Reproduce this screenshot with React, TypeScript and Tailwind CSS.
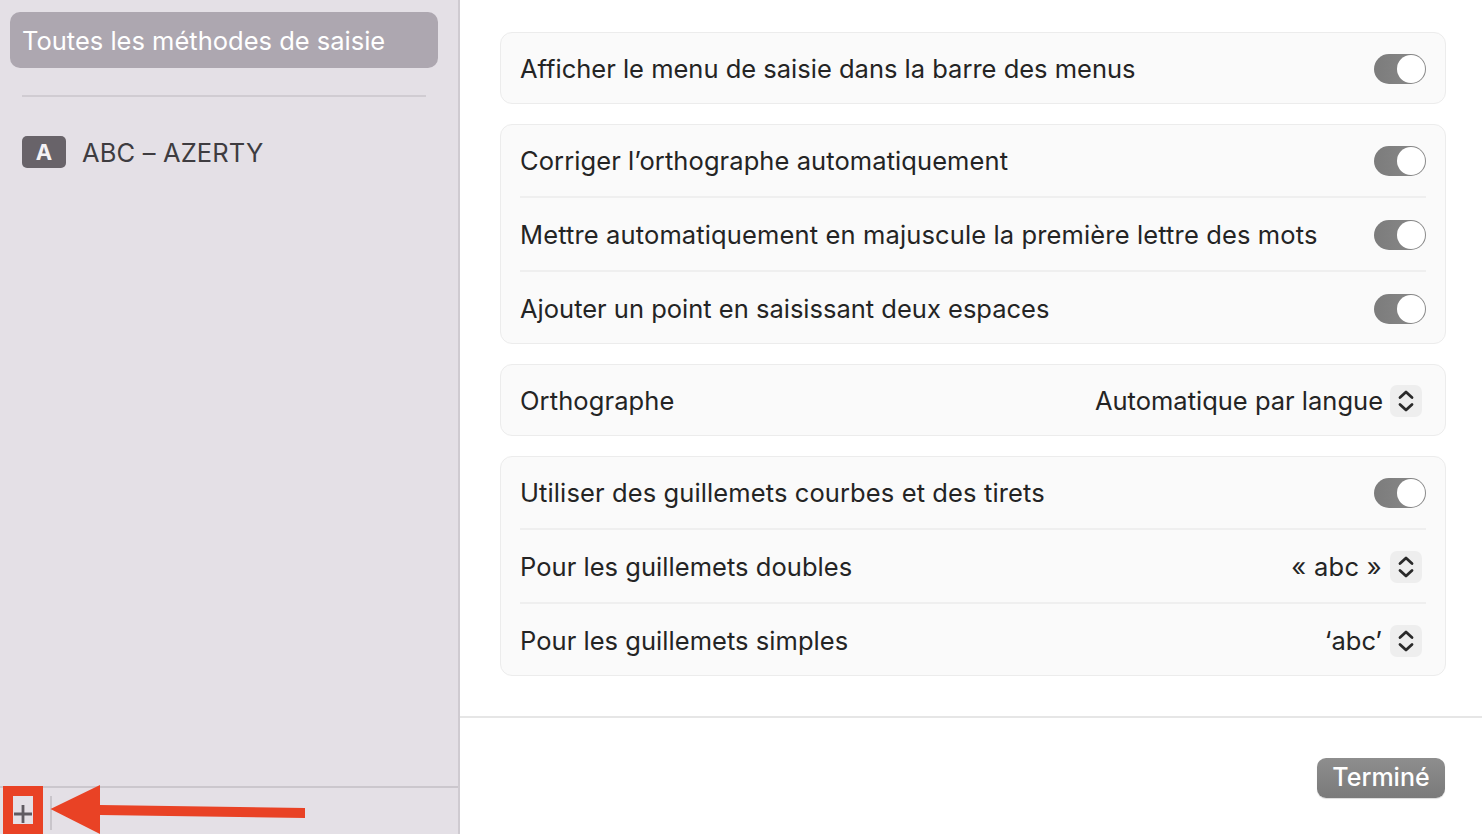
import React from "react";

function Toggle() {
  return (
    <div className="flex h-[30px] w-[52px] shrink-0 items-center justify-end rounded-full bg-gradient-to-r from-[#7c7c7c] to-[#8a8a8a] pr-[1px]">
      <div className="h-[28px] w-[28px] rounded-full bg-white" />
    </div>
  );
}

function Stepper() {
  return (
    <div className="flex h-[32px] w-[32px] shrink-0 items-center justify-center rounded-[7px] bg-[#eeeeee]">
      <svg width="16" height="26" viewBox="0 0 16 26" fill="none" stroke="#2a2a2a" strokeWidth="2.8" strokeLinecap="round" strokeLinejoin="round">
        <path d="M2 9.5 L8 4 L14 9.5" />
        <path d="M2 16.5 L8 22 L14 16.5" />
      </svg>
    </div>
  );
}

function Row({
  label,
  value,
  toggle,
  divider,
  labelClass,
  valueClass,
}: {
  label: string;
  value?: string;
  toggle?: boolean;
  divider?: boolean;
  labelClass?: string;
  valueClass?: string;
}) {
  return (
    <div className="px-[19px]">
      <div className={`flex items-center justify-between ${divider ? "mb-px h-[73px] border-b-2 border-[#efefef] pt-px" : "h-[70px] pt-[2px]"}`}>
        <span className={labelClass}>{label}</span>
        {toggle ? (
          <Toggle />
        ) : (
          <div className="flex items-center gap-[7px] pr-[4px]">
            <span className={valueClass}>{value}</span>
            <Stepper />
          </div>
        )}
      </div>
    </div>
  );
}

function Card({ children }: { children: React.ReactNode }) {
  return <div className="rounded-[12px] border border-[#ececec] bg-[#fafafa]">{children}</div>;
}

export default function App() {
  return (
    <div className="relative flex h-[834px] w-[1482px] overflow-hidden bg-white font-['Inter',sans-serif] text-[25.5px] text-[#242424]">
      <aside className="flex w-[460px] shrink-0 flex-col border-r-2 border-[#cfcbd1] bg-[#e4e0e6]">
        <div className="flex-1 px-[10px] pt-3">
          <div className="flex h-[56px] w-[428px] items-center rounded-[10px] bg-[#ada7b0] px-3 pt-[2px] text-white">
            Toutes les méthodes de saisie
          </div>
          <div className="mx-3 mt-[27px] h-[2px] w-[404px] bg-[#d0ccd2]" />
          <div className="mt-[38px] flex items-center gap-4 px-3 leading-[32px] text-[#3e3c40]">
            <div className="flex h-[32px] w-[44px] items-center justify-center rounded-[5px] bg-[#686369] text-[22px] font-bold text-[#f4f2f5]">
              A
            </div>
            <span className="mt-[2px] tracking-[0.15px]">ABC – AZERTY</span>
          </div>
        </div>
        <div className="h-[48px] shrink-0 border-t-2 border-[#cbc7cd]" />
      </aside>

      <main className="flex flex-1 flex-col">
        <div className="flex flex-1 flex-col gap-5 pl-10 pr-9 pt-8">
          <Card>
            <Row label="Afficher le menu de saisie dans la barre des menus" toggle />
          </Card>
          <Card>
            <Row label="Corriger l’orthographe automatiquement" toggle divider labelClass="tracking-[0.08px]" />
            <Row label="Mettre automatiquement en majuscule la première lettre des mots" toggle divider labelClass="tracking-[0.13px]" />
            <Row label="Ajouter un point en saisissant deux espaces" toggle />
          </Card>
          <Card>
            <Row label="Orthographe" value="Automatique par langue" labelClass="tracking-[0.1px]" />
          </Card>
          <Card>
            <Row label="Utiliser des guillemets courbes et des tirets" toggle divider labelClass="tracking-[0.11px]" />
            <Row label="Pour les guillemets doubles" value="« abc »" divider labelClass="tracking-[0.04px]" valueClass="mr-px tracking-[0.3px]" />
            <Row label="Pour les guillemets simples" value="‘abc’" labelClass="tracking-[0.04px]" valueClass="mr-px" />
          </Card>
        </div>
        <div className="flex h-[118px] shrink-0 items-start justify-end border-t-2 border-[#e6e6e6] pr-[37px] pt-[40px]">
          <div className="flex h-[40px] w-[128px] items-center justify-center rounded-[9px] bg-gradient-to-b from-[#8e8e8e] to-[#7a7a7a] text-[25px] font-medium text-white shadow-[0_1px_1px_rgba(0,0,0,0.15)]">
            Terminé
          </div>
        </div>
      </main>

      {/* annotation over the + button */}
      <div className="absolute left-[3px] top-[786px] flex h-[48px] w-[40px] items-center justify-center border-[10px] border-[#e94225] bg-[#e4e0e6]">
        <svg width="20" height="28" viewBox="0 0 20 28" fill="none" stroke="#5f5b62" strokeWidth="2.8">
          <path d="M10 9 V27 M1 18 H19" />
        </svg>
      </div>
      <div className="absolute left-[50px] top-[796px] h-[34px] w-[2px] bg-[#c9c5cb]" />
      <svg className="absolute left-[50px] top-[784px]" width="256" height="50" viewBox="0 0 256 50" fill="#e94225">
        <path d="M0.5 25 L50 1 V21 L255 24 V34 L50 31 V50 Z" />
      </svg>
    </div>
  );
}
